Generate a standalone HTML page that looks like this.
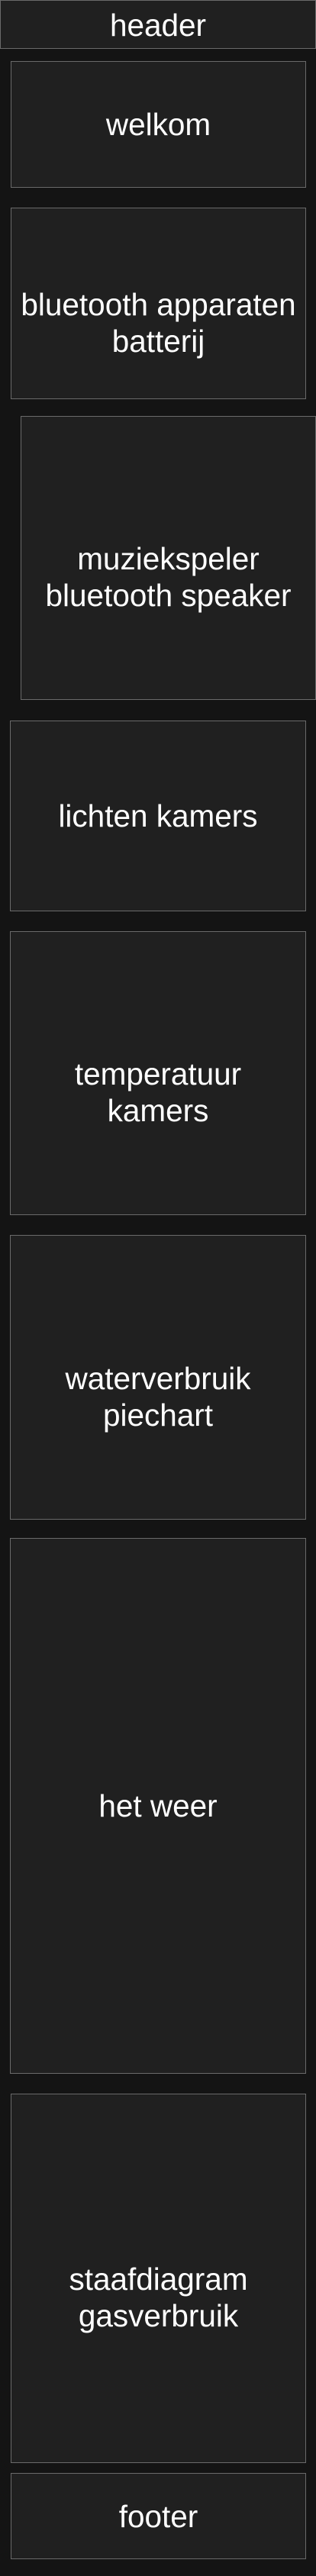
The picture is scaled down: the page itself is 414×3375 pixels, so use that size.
<!DOCTYPE html>
<html><head><meta charset="utf-8"><style>
html,body{margin:0;padding:0;}
body{width:414px;height:3375px;background:#141414;position:relative;overflow:hidden;font-family:"Liberation Sans",Helvetica,Arial,sans-serif;color:#fff;}
.b{position:absolute;box-sizing:border-box;background:#202020;border:1px solid #6a6a6a;display:flex;align-items:center;justify-content:center;text-align:center;font-size:40.5px;line-height:48px;}
.t{padding-top:50px;}
</style></head><body>
<div class="b" style="left:0;top:0;width:414px;height:64px;padding-top:2px;">header</div>
<div class="b" style="left:14px;top:80px;width:387px;height:166px;">welkom</div>
<div class="b t" style="left:14px;top:272px;width:387px;height:251px;">bluetooth apparaten<br>batterij</div>
<div class="b t" style="left:27px;top:545px;width:387px;height:372px;">muziekspeler<br>bluetooth speaker</div>
<div class="b" style="left:13px;top:944px;width:388px;height:250px;">lichten kamers</div>
<div class="b t" style="left:13px;top:1220px;width:388px;height:372px;">temperatuur<br>kamers</div>
<div class="b t" style="left:13px;top:1618px;width:388px;height:373px;">waterverbruik<br>piechart</div>
<div class="b" style="left:13px;top:2015px;width:388px;height:702px;">het weer</div>
<div class="b t" style="left:14px;top:2743px;width:387px;height:484px;">staafdiagram<br>gasverbruik</div>
<div class="b" style="left:14px;top:3240px;width:387px;height:113px;">footer</div>
</body></html>
